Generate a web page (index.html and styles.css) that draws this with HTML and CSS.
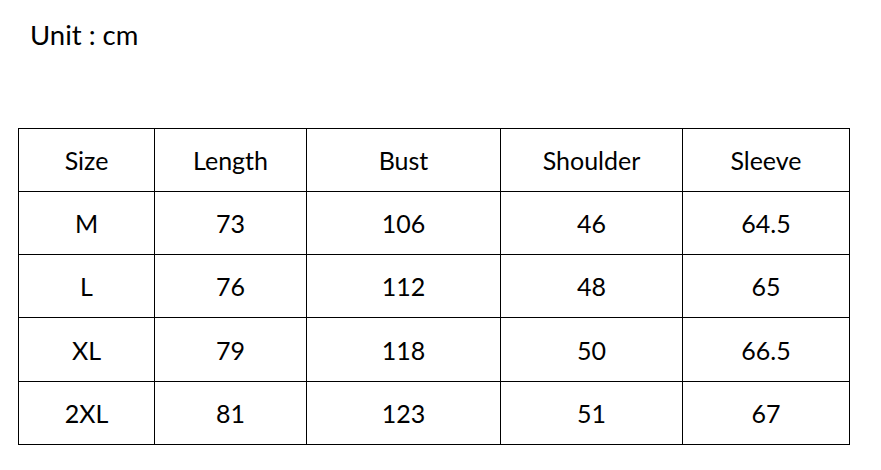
FILE: index.html
```html
<!DOCTYPE html>
<html>
<head>
<meta charset="utf-8">
<link rel="stylesheet" href="styles.css">
</head>
<body>
<div class="page">
  <div class="unit">Unit : cm</div>
  <table class="sizes">
    <colgroup>
      <col class="c1"><col class="c2"><col class="c3"><col class="c4"><col class="c5">
    </colgroup>
    <tr><td>Size</td><td>Length</td><td>Bust</td><td>Shoulder</td><td>Sleeve</td></tr>
    <tr><td>M</td><td>73</td><td>106</td><td>46</td><td>64.5</td></tr>
    <tr><td>L</td><td>76</td><td>112</td><td>48</td><td>65</td></tr>
    <tr class="tall"><td>XL</td><td>79</td><td>118</td><td>50</td><td>66.5</td></tr>
    <tr><td>2XL</td><td>81</td><td>123</td><td>51</td><td>67</td></tr>
  </table>
</div>
</body>
</html>
```
FILE: styles.css
```css
html, body {
  margin: 0;
  padding: 0;
  background: #ffffff;
}
.page {
  padding: 18px 0 0 18px;
  font-family: Lato, "Open Sans", "Liberation Sans", sans-serif;
  color: #000000;
}
.unit {
  font-size: 27.5px;
  line-height: 34px;
  padding-left: 12px;
  margin-bottom: 76px;
}
.sizes {
  border-collapse: collapse;
  table-layout: fixed;
  width: 831px;
}
.sizes td {
  border: 1px solid #000000;
  text-align: center;
  vertical-align: middle;
  font-size: 25px;
  height: 62px;
  padding: 0;
}
.sizes .tall td {
  height: 63px;
}
.c1 { width: 136px; }
.c2 { width: 152px; }
.c3 { width: 194px; }
.c4 { width: 182px; }
.c5 { width: 167px; }
```
